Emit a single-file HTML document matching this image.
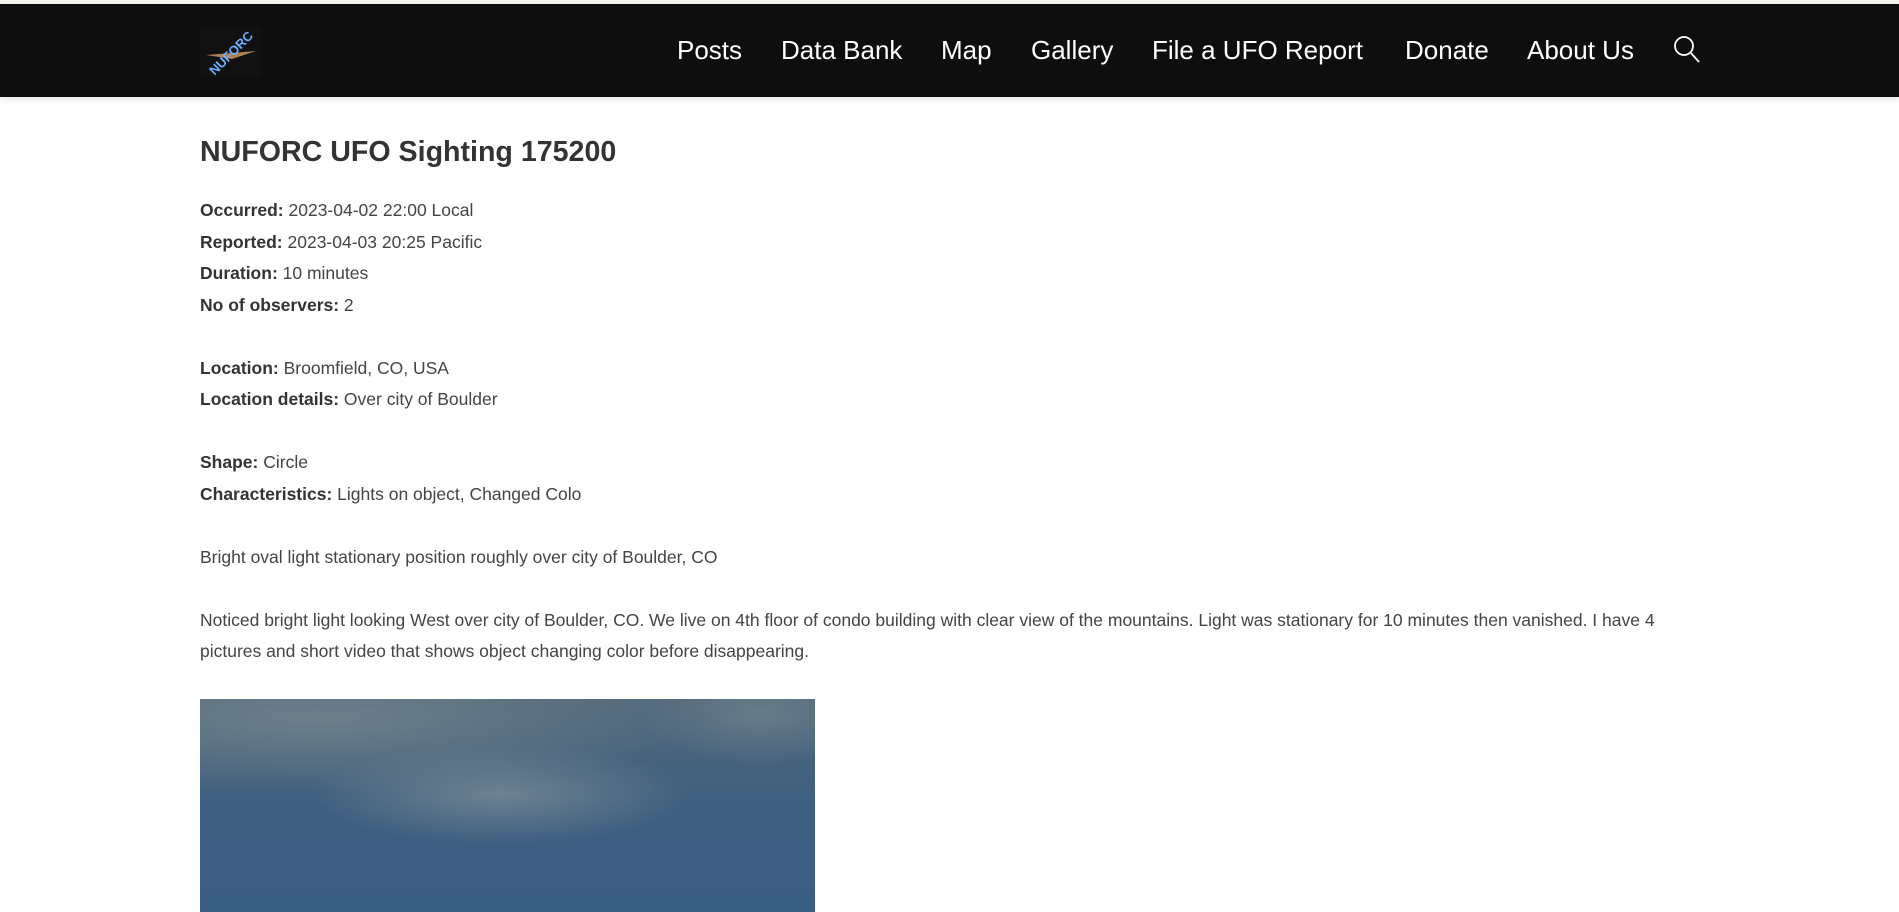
<!DOCTYPE html>
<html><head><meta charset="utf-8"><style>
*{margin:0;padding:0;box-sizing:border-box}
body{width:1899px;height:912px;overflow:hidden;background:#fff;font-family:"Liberation Sans",Arial,sans-serif;position:relative}
.top{position:absolute;left:0;top:0;width:1899px;height:4px;background:#f4f6ee}
.hdr{position:absolute;left:0;top:4px;width:1899px;height:93px;background:#0e0e0e;box-shadow:0 2px 6px rgba(0,0,0,.12)}
.logo{position:absolute;left:200px;top:23px;width:61px;height:50px;background:#111}
.nav a{position:absolute;top:31px;color:#fff;font-size:26px;text-decoration:none;white-space:nowrap}
h1{position:absolute;left:200px;top:136px;font-size:28.6px;color:#333;font-weight:bold}
.c{position:absolute;left:200px;top:195px;width:1480px;font-size:17.5px;line-height:31.5px;color:#444}
.c b{color:#333}
.img{position:absolute;left:200px;top:699px;width:615px;height:213px;
background:
radial-gradient(ellipse 190px 50px at 300px 95px,rgba(112,132,146,.95),rgba(112,132,146,0) 100%),
radial-gradient(ellipse 380px 75px at 120px 20px,rgba(110,128,138,.95),rgba(110,128,138,0) 100%),
radial-gradient(ellipse 120px 50px at 560px 15px,rgba(110,128,140,.8),rgba(110,128,140,0) 100%),
linear-gradient(#52697c,#3d5f80 50%,#3a5e82)}
</style></head><body>
<div class="top"></div>
<div class="hdr">
<div class="logo"><svg width="61" height="50" viewBox="0 0 61 50"><polygon points="6,28 56,24 32,32" fill="#b08050"/><text x="30" y="31" text-anchor="middle" transform="rotate(-45 30 25)" font-family="Liberation Sans" font-weight="bold" font-size="13" fill="#6ab0ff">NUFORC</text></svg></div>
<div class="nav">
<a style="left:677px">Posts</a>
<a style="left:781px">Data Bank</a>
<a style="left:941px">Map</a>
<a style="left:1031px">Gallery</a>
<a style="left:1152px">File a UFO Report</a>
<a style="left:1405px">Donate</a>
<a style="left:1527px">About Us</a>
</div>
<svg style="position:absolute;left:1672px;top:30px" width="30" height="32" viewBox="0 0 30 32"><circle cx="12" cy="12" r="9" fill="none" stroke="#fff" stroke-width="1.8"/><line x1="18.5" y1="18.5" x2="27" y2="28" stroke="#fff" stroke-width="1.8"/></svg>
</div>
<h1>NUFORC UFO Sighting 175200</h1>
<div class="c">
<b>Occurred:</b> 2023-04-02 22:00 Local<br>
<b>Reported:</b> 2023-04-03 20:25 Pacific<br>
<b>Duration:</b> 10 minutes<br>
<b>No of observers:</b> 2<br><br>
<b>Location:</b> Broomfield, CO, USA<br>
<b>Location details:</b> Over city of Boulder<br><br>
<b>Shape:</b> Circle<br>
<b>Characteristics:</b> Lights on object, Changed Colo<br><br>
Bright oval light stationary position roughly over city of Boulder, CO<br><br>
Noticed bright light looking West over city of Boulder, CO. We live on 4th floor of condo building with clear view of the mountains. Light was stationary for 10 minutes then vanished. I have 4 pictures and short video that shows object changing color before disappearing.
</div>
<div class="img"></div>
</body></html>
